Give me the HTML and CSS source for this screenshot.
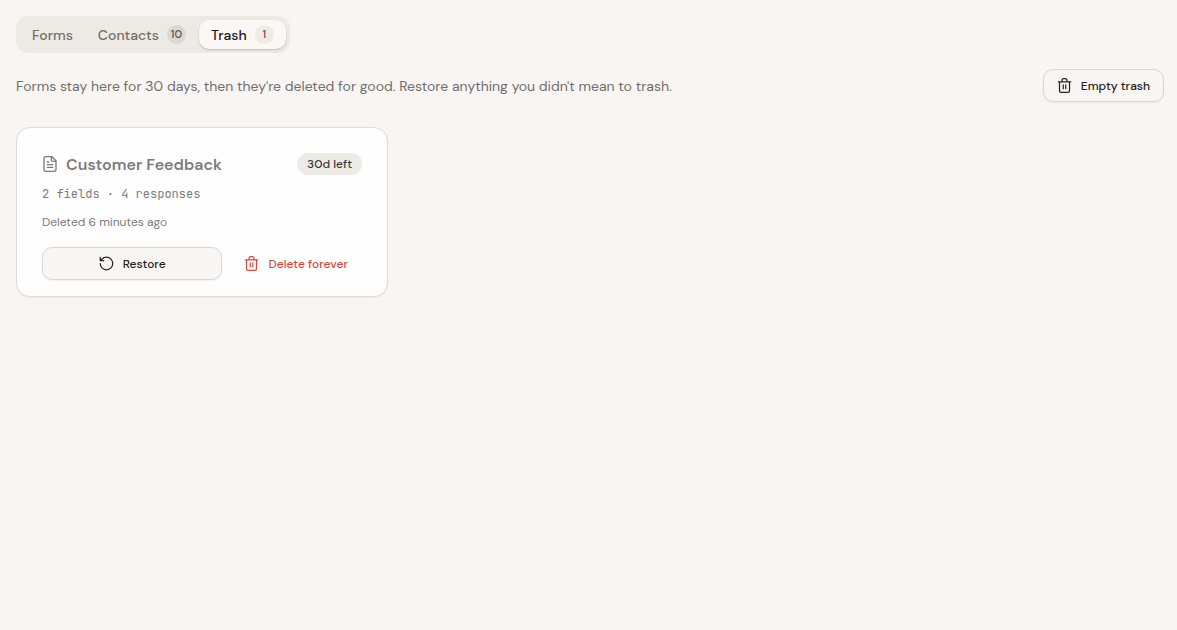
FILE: index.html
```html
<!DOCTYPE html>
<html lang="en">
<head>
    <meta charset="UTF-8">
    <meta name="viewport" content="width=device-width, initial-scale=1.0">
    <title>Trash</title>
    <link rel="stylesheet" href="styles.css">
</head>
<body>
    <!-- Tabs -->
    <nav class="tabs">
        <a class="tab" href="#forms">Forms</a>
        <a class="tab" href="#contacts">Contacts <span class="count">10</span></a>
        <a class="tab active" href="#trash" aria-current="page">Trash <span class="count">1</span></a>
    </nav>

    <main>
        <div class="toolbar">
            <p>Forms stay here for 30 days, then they're deleted for good. Restore anything you didn't mean to trash.</p>
            <button class="btn btn-outline" type="button">
                <svg class="icon" viewBox="0 0 24 24" aria-hidden="true">
                    <path d="M2 6h20M20 6v14a3 3 0 0 1-3 3H7a3 3 0 0 1-3-3V6M8 6V4a3 3 0 0 1 3-3h2a3 3 0 0 1 3 3v2M10 11v6M14 11v6"/>
                </svg>
                Empty trash
            </button>
        </div>

        <!-- Deleted forms -->
        <div class="cards">
            <article class="card">
                <div class="card-head">
                    <svg class="icon" viewBox="0 0 24 24" aria-hidden="true">
                        <path d="M15 1H6a3 3 0 0 0-3 3v16a3 3 0 0 0 3 3h12a3 3 0 0 0 3-3V7zM14 1v5a2 2 0 0 0 2 2h5M10 9H8M16 13H8M16 17H8"/>
                    </svg>
                    <h2>Customer Feedback</h2>
                    <span class="badge">30d left</span>
                </div>
                <p class="stats">2 fields · 4 responses</p>
                <p class="deleted">Deleted 6 minutes ago</p>
                <div class="actions">
                    <button class="btn btn-outline restore" type="button">
                        <svg class="icon" viewBox="0 0 24 24" aria-hidden="true">
                            <path d="M2 12a10 10 0 1 0 10-10 10.500 10.500 0 0 0-7.200 2.900L2 7.500M2 2v5.500h5.500"/>
                        </svg>
                        Restore
                    </button>
                    <button class="btn btn-danger" type="button">
                        <svg class="icon" viewBox="0 0 24 24" aria-hidden="true">
                            <path d="M2 6h20M20 6v14a3 3 0 0 1-3 3H7a3 3 0 0 1-3-3V6M8 6V4a3 3 0 0 1 3-3h2a3 3 0 0 1 3 3v2M10 11v6M14 11v6"/>
                        </svg>
                        Delete forever
                    </button>
                </div>
            </article>
        </div>
    </main>
</body>
</html>
```

FILE: styles.css
```css
* {
    box-sizing: border-box;
}
body {
    margin: 0;
    padding: 16px 13px 16px 16px;
    background-color: #f9f5f2;
    color: #262421;
    font-family: "DM Sans", "Open Sans", sans-serif;
    font-size: 14px;
}
h2, p {
    margin: 0;
}
.icon {
    width: 16px;
    height: 16px;
    flex-shrink: 0;
    fill: none;
    stroke: currentColor;
    stroke-width: 2;
    stroke-linecap: round;
    stroke-linejoin: round;
}

/* Tabs */
.tabs {
    display: inline-flex;
    gap: 1px;
    padding: 4px;
    border-radius: 12px;
    background-color: #edeae4;
}
.tab {
    display: flex;
    align-items: center;
    gap: 8px;
    height: 29px;
    padding: 0 12px;
    border-radius: 10px;
    color: #716e6b;
    font-weight: 500;
    text-decoration: none;
}
.tab.active {
    background-color: #faf7f4;
    color: #1c1a18;
    box-shadow: 0 1px 2px rgba(0, 0, 0, 0.2);
}
.count {
    min-width: 19px;
    border-radius: 10px;
    background-color: #dbd8d2;
    color: #55524e;
    font-size: 11px;
    line-height: 19px;
    text-align: center;
}
.active .count {
    background-color: #eeebe5;
}

/* Toolbar */
.toolbar {
    display: flex;
    align-items: center;
    justify-content: space-between;
    gap: 16px;
    margin: 16px 0 25px;
    color: #716e6b;
}
.btn {
    display: flex;
    align-items: center;
    justify-content: center;
    gap: 9px;
    height: 33px;
    padding: 0 13px;
    border: 1px solid transparent;
    border-radius: 10px;
    background: none;
    color: #262421;
    font-family: inherit;
    font-size: 12px;
    font-weight: 500;
    white-space: nowrap;
    cursor: pointer;
}
.btn .icon {
    width: 15px;
    height: 15px;
}
.btn-outline {
    border-color: #d8d6d2;
    background-color: #f9f5f2;
    box-shadow: 0 1px 2px rgba(0, 0, 0, 0.06);
}
.btn-danger {
    color: #cf4b42;
}

/* Cards */
.cards {
    display: grid;
    grid-template-columns: repeat(3, 1fr);
    gap: 16px;
}
.card {
    padding: 23px 25px 16px;
    border: 1px solid #dfdcd9;
    border-radius: 14px;
    background-color: #fefefe;
    box-shadow: 0 1px 2px rgba(0, 0, 0, 0.05);
    color: #7c7b7a;
}
.card-head {
    display: flex;
    align-items: center;
    gap: 8px;
    height: 26px;
}
.card-head h2 {
    flex: 1;
    font-size: 16px;
    font-weight: 600;
}
.badge {
    padding: 0 10px;
    border-radius: 11px;
    background-color: #eeeae6;
    color: #3c3a37;
    font-size: 12px;
    font-weight: 500;
    line-height: 22px;
}
.stats {
    margin-top: 7px;
    font-family: "JetBrains Mono", "Liberation Mono", monospace;
    font-size: 12px;
    line-height: 20px;
}
.deleted {
    margin-top: 9px;
    font-size: 12px;
    line-height: 18px;
}
.actions {
    display: flex;
    gap: 8px;
    margin-top: 16px;
}
.restore {
    flex: 1;
}
```
